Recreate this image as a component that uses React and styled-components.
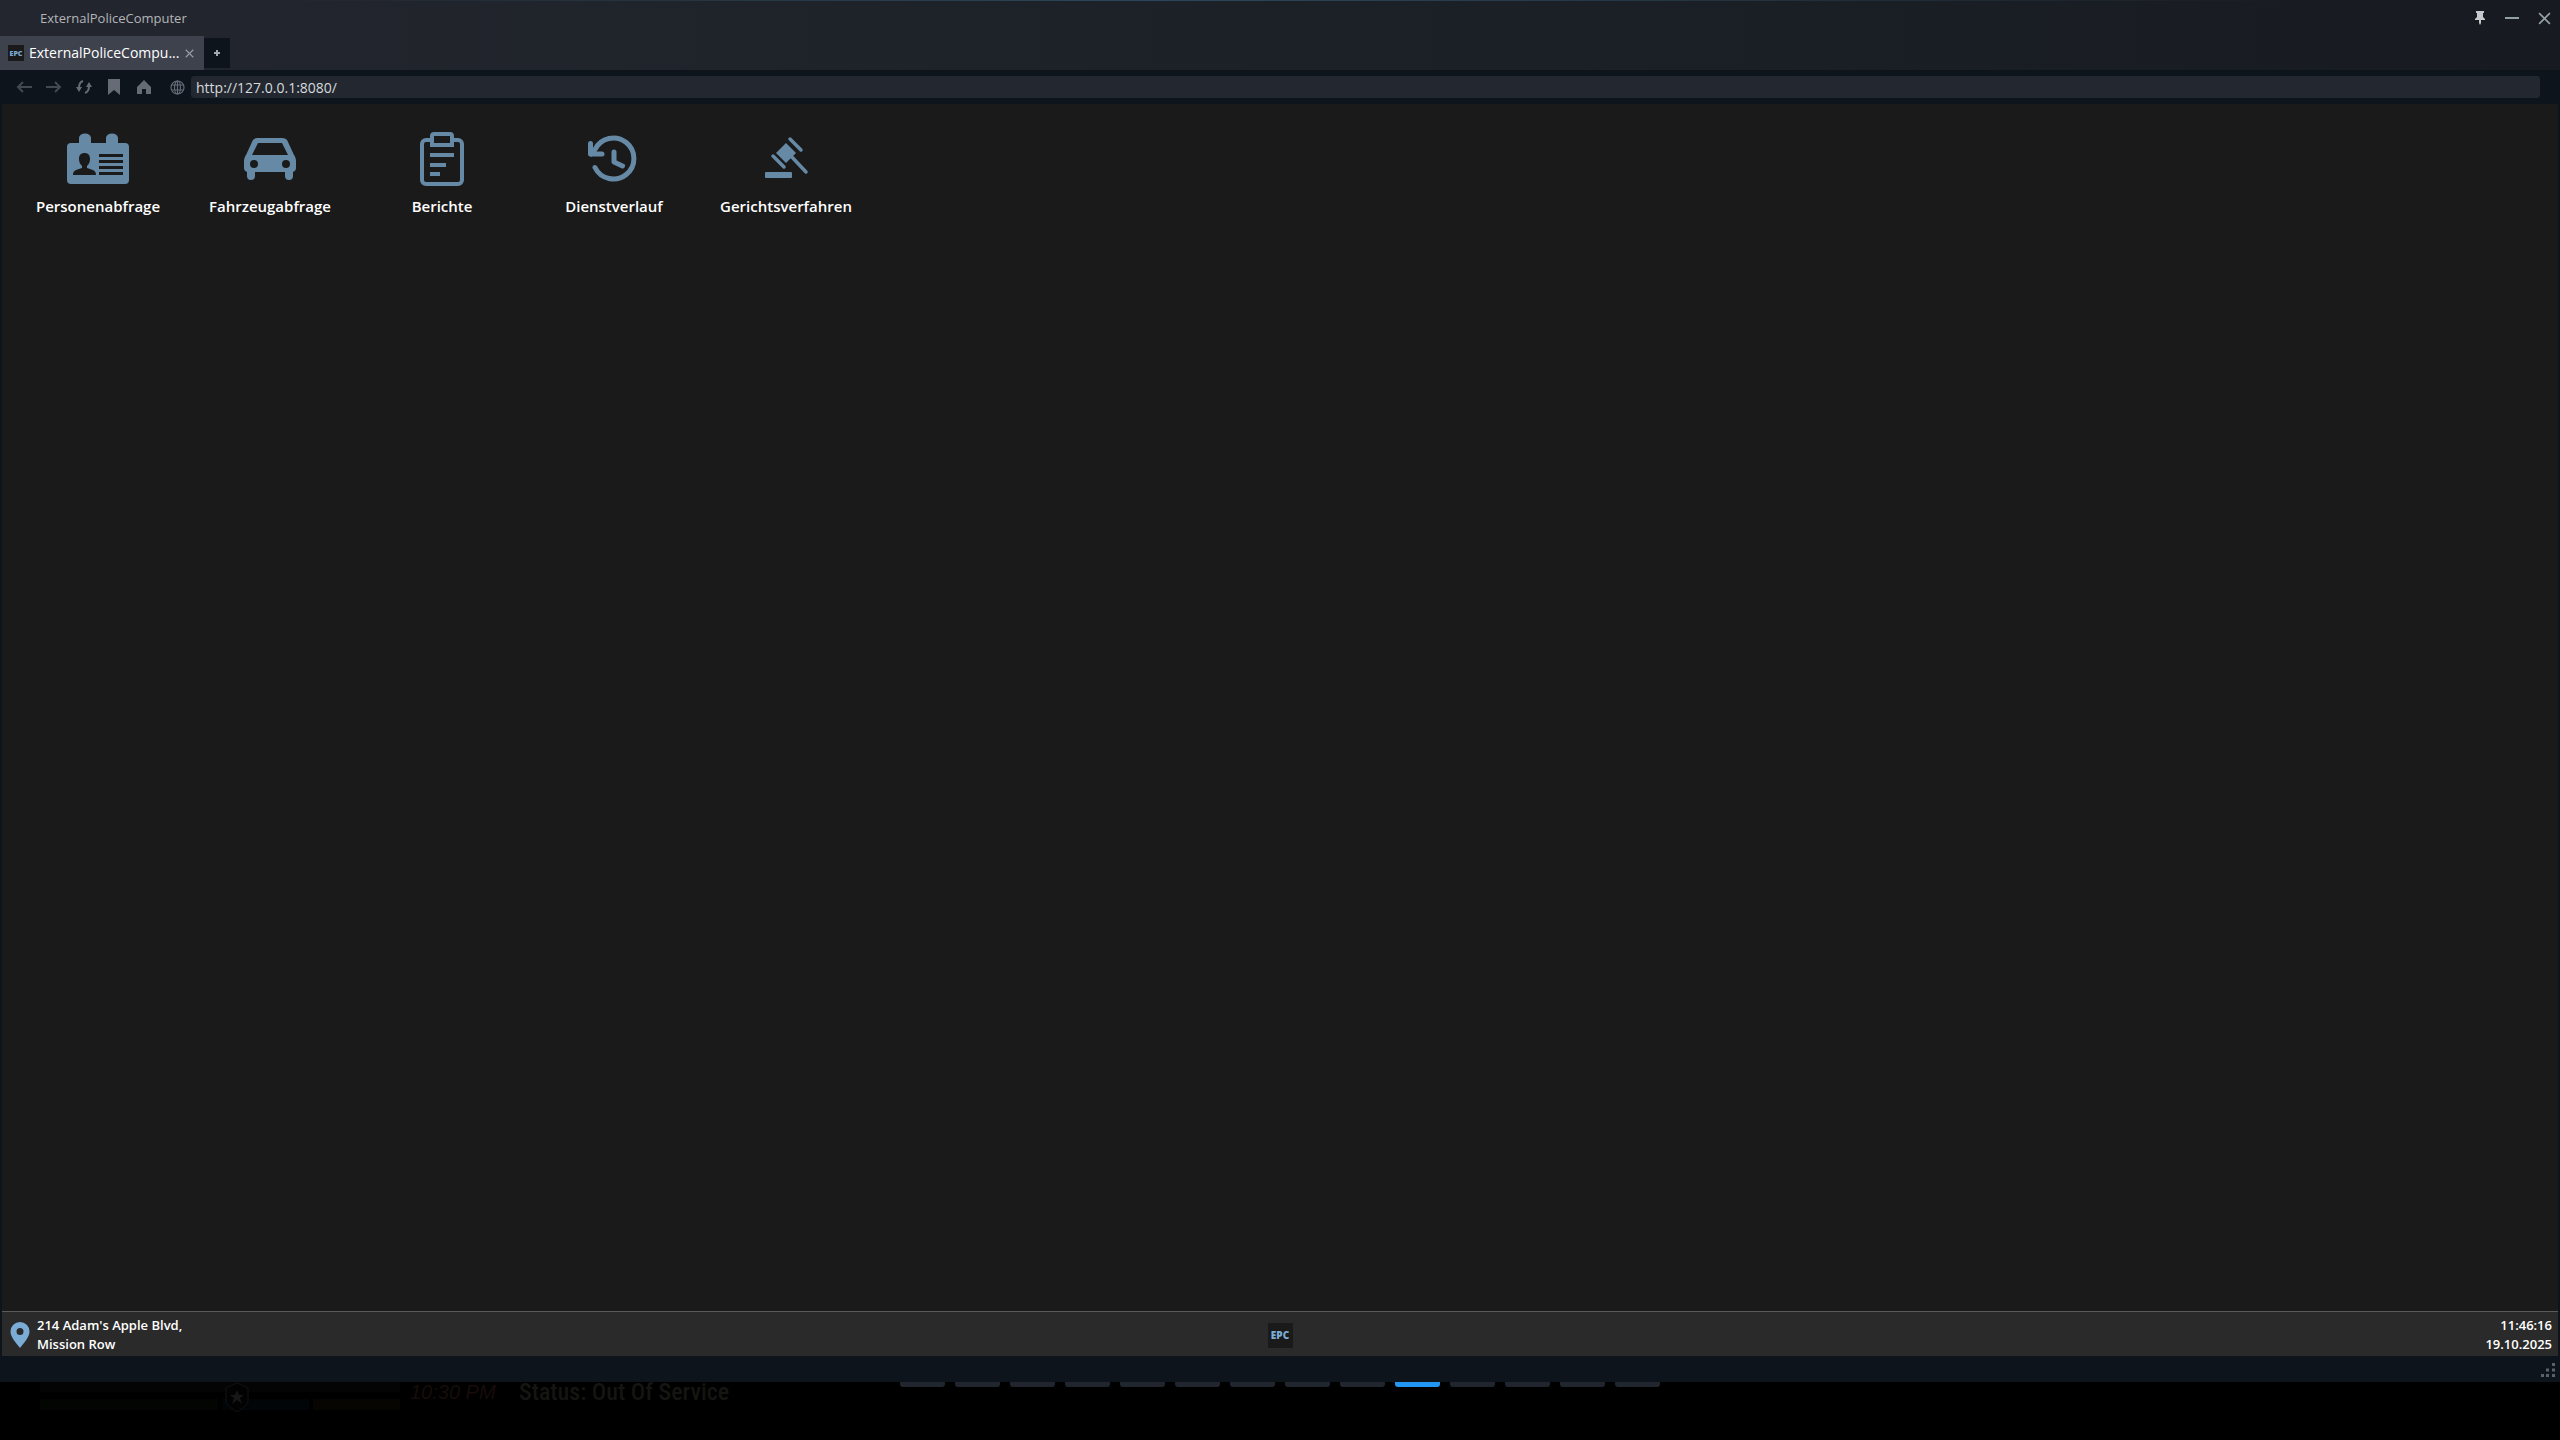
import React from 'react';
import styled, { createGlobalStyle, css } from 'styled-components';

const GlobalStyle = createGlobalStyle`
  * {
    box-sizing: border-box;
  }

  body {
    margin: 0;
    background: #000;
    font-family: 'Open Sans', 'Noto Sans', sans-serif;
  }

  button {
    border: 0;
    padding: 0;
    background: none;
    font: inherit;
    color: inherit;
    cursor: pointer;
  }
`;

const Screen = styled.div`
  display: flex;
  flex-direction: column;
  min-height: 100vh;
  background: #000;
`;

const Window = styled.main`
  display: flex;
  flex-direction: column;
  flex: 1;
  background: #0d141c;
`;

const WindowTop = styled.header`
  background:
    linear-gradient(to right, transparent 10%, #2c475b 45%, transparent 90%) 0 0 / 100% 1px no-repeat,
    linear-gradient(to right, #23262e, #1c2128 50%, #171a21);
`;

const TitleBar = styled.div`
  display: flex;
  align-items: center;
  justify-content: space-between;
  height: 36px;
  padding: 0 8px 0 40px;
`;

const Title = styled.h1`
  margin: 0;
  font-size: 13px;
  font-weight: 400;
  line-height: 18px;
  color: #b3b5b9;
`;

const WindowButtons = styled.div`
  display: flex;
  gap: 16px;
`;

const WindowButton = styled.button`
  display: flex;
  align-items: center;
  justify-content: center;
  width: 16px;
  height: 16px;
  color: #93a0a8;
`;

const TabBar = styled.nav`
  display: flex;
  align-items: center;
  height: 34px;
`;

const Tab = styled.div`
  display: flex;
  align-items: center;
  gap: 5px;
  width: 204px;
  height: 34px;
  padding: 0 10px 0 8px;
  background: #3d424d;
  color: #fff;
`;

const TabTitle = styled.span`
  flex: 1;
  white-space: nowrap;
  font-size: 14px;
  font-weight: 500;
  line-height: 20px;
`;

const TabClose = styled.button`
  display: flex;
  color: #9a9da3;
`;

const NewTab = styled.button`
  display: flex;
  align-items: center;
  justify-content: center;
  width: 26px;
  height: 30px;
  background: #0d141c;
  color: #a5a8ac;
`;

const Toolbar = styled.div`
  display: flex;
  align-items: center;
  height: 34px;
  padding: 0 20px 0 16px;
`;

const ToolButtons = styled.div`
  display: flex;
  gap: 14px;
  margin-right: 18px;
`;

const ToolButton = styled.button`
  display: flex;
  color: ${(props) => (props.disabled ? '#434851' : '#666b75')};
`;

const AddressIcon = styled.label`
  display: flex;
  margin-right: 6px;
  color: #666b75;
`;

const AddressInput = styled.input`
  flex: 1;
  height: 22px;
  padding: 0 5px;
  border: 0;
  border-radius: 3px;
  outline: 0;
  background: #23272f;
  color: #d5dade;
  font: 400 14px 'Open Sans', 'Noto Sans', sans-serif;
`;

const Page = styled.section`
  display: flex;
  flex-direction: column;
  flex: 1;
  margin: 0 2px;
  background: #1a1a1a;
  color: #fff;
`;

const Desktop = styled.div`
  display: flex;
  align-items: flex-start;
  flex: 1;
  gap: 22px;
  padding: 24px 21px;
`;

const Shortcut = styled.button`
  display: flex;
  flex-direction: column;
  align-items: center;
  gap: 8px;
  width: 150px;
  color: #6689a5;
`;

const ShortcutLabel = styled.span`
  color: #fff;
  font-size: 15px;
  font-weight: 600;
  line-height: 24px;
`;

const Taskbar = styled.footer`
  display: grid;
  grid-template-columns: 1fr auto 1fr;
  align-items: center;
  height: 45px;
  padding: 2px 6px 0;
  border-top: 1px solid #5a5a5a;
  background: #2a2a2a;
  font-size: 13px;
  font-weight: 600;
  line-height: 19px;
`;

const Location = styled.div`
  display: flex;
  align-items: center;
  gap: 7px;
  padding-left: 2px;
`;

const Clock = styled.div`
  text-align: right;
`;

const Badge = styled.span`
  display: flex;
  align-items: center;
  justify-content: center;
  width: 25px;
  height: 25px;
  background: #1a1a1a;
  color: #7aacd6;
  font: 800 10px 'Open Sans', sans-serif;

  ${(props) =>
    props.$small &&
    css`
      width: 16px;
      height: 16px;
      font-size: 7px;
    `}
`;

const ResizeBar = styled.div`
  display: flex;
  align-items: flex-end;
  justify-content: flex-end;
  height: 26px;
  padding: 5px;
  color: #59616b;
`;

const Overlay = styled.div`
  display: grid;
  grid-template-columns: 1fr auto 1fr;
  align-items: start;
  height: 58px;
`;

const GameHud = styled.div`
  display: flex;
  align-items: flex-start;
  padding-left: 40px;
`;

const HudBars = styled.svg`
  width: 360px;
  height: 30px;
  margin-right: 10px;
`;

const HudTime = styled.span`
  width: 109px;
  color: #170c0a;
  font: italic 400 20px/20px 'Liberation Sans', sans-serif;
`;

const HudStatus = styled.span`
  color: #151512;
  font: 500 24px/20px 'Liberation Sans Narrow', 'Roboto Condensed', Roboto, sans-serif;
`;

const Slots = styled.div`
  display: flex;
  gap: 10px;
`;

const Slot = styled.span`
  width: 45px;
  height: 5px;
  border-radius: 0 0 3px 3px;
  background: ${(props) => (props.$active ? '#2196f3' : '#21252d')};
`;

const PersonIcon = () => (
  <svg width="64" height="58" viewBox="0 0 64 58" aria-hidden="true">
    <path
      fill="currentColor"
      fillRule="evenodd"
      d="M13 15V10a6 4.500 0 0 1 12 0v5h15v-5a6 4.500 0 0 1 12 0v5h7a4 4 0 0 1 4 4v33a4 4 0 0 1-4 4H5a4 4 0 0 1-4-4V19a4 4 0 0 1 4-4zM7 47h23c0-4-2-5-9-7v-2c2-2 3-4 3-7 0-4-2-6-5.500-6s-5.500 2-5.500 6c0 3 1 5 3 7v2c-7 2-9 3-9 7zM33 26v3h24v-3zm0 6v3h24v-3zm0 6v3h24v-3zm0 6v3h24v-3z"
    />
  </svg>
);

const CarIcon = () => (
  <svg width="64" height="58" viewBox="0 0 64 58" aria-hidden="true">
    <path
      fill="currentColor"
      fillRule="evenodd"
      d="M20 10h24c3 0 5 1 6 4l6 13c1 1 2 4 2 6v7c0 2-1 3-3 4v4a4 4 0 0 1-8 0v-4H17v4a4 4 0 0 1-8 0v-4c-2-1-3-2-3-4v-7c0-2 1-5 2-6l6-13c1-3 3-4 6-4zM20 15 14 27h36l-6-12zM16 32a4 4 0 1 0 0 8 4 4 0 0 0 0-8zM48 32a4 4 0 1 0 0 8 4 4 0 0 0 0-8z"
    />
  </svg>
);

const ReportIcon = () => (
  <svg width="64" height="58" viewBox="0 0 64 58" fill="none" stroke="currentColor" strokeWidth="4" aria-hidden="true">
    <path d="M21 12h-5a4 4 0 0 0-4 4v36a4 4 0 0 0 4 4h32a4 4 0 0 0 4-4V16a4 4 0 0 0-4-4h-5" />
    <path d="M22 17V8a2 2 0 0 1 2-2h16a2 2 0 0 1 2 2v9z" />
    <path d="M20 27h24M20 37h16M20 46h10" />
  </svg>
);

const HistoryIcon = () => (
  <svg width="64" height="58" viewBox="0 0 64 58" fill="none" stroke="currentColor" strokeWidth="5" strokeLinecap="round" strokeLinejoin="round" aria-hidden="true">
    <path d="M13 39.500A20.500 20.500 0 1 0 13 21.500L9 26" />
    <path d="M8.500 15.500v10.500h11.500" />
    <path d="M32 24v10l8.500 4" />
  </svg>
);

const GavelIcon = () => (
  <svg width="64" height="58" viewBox="0 0 64 58" aria-hidden="true">
    <rect x="11" y="44" width="27" height="6" rx="1" fill="currentColor" />
    <path fill="currentColor" d="m22 25 10-10 10 10-10 10z" />
    <path d="m19 28 11 11M36 11l11 11M36 27l16 17" stroke="currentColor" strokeWidth="3.500" strokeLinecap="round" />
  </svg>
);

const PinIcon = () => (
  <svg width="16" height="16" viewBox="0 0 16 16" aria-hidden="true">
    <path fill="#c6c9cc" d="M4 1h8v2h-1v4l2 2v1H9v3l-1 2-1-2v-3H3V9l2-2V3H4z" />
  </svg>
);

const ArrowIcon = ({ forward }) => (
  <svg width="16" height="16" viewBox="0 0 16 16" fill="none" stroke="currentColor" strokeWidth="2" aria-hidden="true">
    <path d={forward ? 'M0 8h14M9 3l5 5-5 5' : 'M16 8H2M7 3 2 8l5 5'} />
  </svg>
);

const ReloadIcon = () => (
  <svg width="16" height="16" viewBox="0 0 16 16" aria-hidden="true">
    <path d="M7 2C4 3 3 5 3 9M9 14c3-1 4-3 4-7" fill="none" stroke="currentColor" strokeWidth="2" />
    <path fill="currentColor" d="M0 8h6l-3 5zM10 8h6l-3-5z" />
  </svg>
);

const BookmarkIcon = () => (
  <svg width="16" height="16" viewBox="0 0 16 16" aria-hidden="true">
    <path fill="currentColor" d="M2 0h12v16l-6-5-6 5z" />
  </svg>
);

const HomeIcon = () => (
  <svg width="16" height="16" viewBox="0 0 16 16" aria-hidden="true">
    <path fill="currentColor" d="M8 1 1 8v7h5v-5h4v5h5V8z" />
  </svg>
);

const GlobeIcon = () => (
  <svg width="15" height="15" viewBox="0 0 15 15" fill="none" stroke="currentColor" strokeWidth="1.200" aria-hidden="true">
    <circle cx="7.500" cy="7.500" r="6.500" />
    <ellipse cx="7.500" cy="7.500" rx="3" ry="6.500" />
    <path d="M7.500 1v13M2 5h11M2 10h11" />
  </svg>
);

const CloseIcon = ({ size }) => (
  <svg width={size} height={size} viewBox="0 0 12 12" fill="none" stroke="currentColor" strokeWidth="1.500" aria-hidden="true">
    <path d="m1 1 10 10M11 1 1 11" />
  </svg>
);

const MarkerIcon = () => (
  <svg width="20" height="26" viewBox="0 0 20 26" aria-hidden="true">
    <path fill="#7aacd6" fillRule="evenodd" d="M10 0a9.500 9.500 0 0 1 9.500 9.500C19.500 15 14 21 10 26 6 21 .5 15 .5 9.500A9.500 9.500 0 0 1 10 0zm0 6a3.500 3.500 0 1 0 0 7 3.500 3.500 0 0 0 0-7z" />
  </svg>
);

const GripIcon = () => (
  <svg width="14" height="14" viewBox="0 0 14 14" fill="currentColor" aria-hidden="true">
    <path d="M11 0h3v3h-3zM5 5.500h3v3H5zM11 5.500h3v3h-3zM0 11h3v3H0zM5 11h3v3H5zM11 11h3v3h-3z" />
  </svg>
);

const shortcuts = [
  { label: 'Personenabfrage', Icon: PersonIcon },
  { label: 'Fahrzeugabfrage', Icon: CarIcon },
  { label: 'Berichte', Icon: ReportIcon },
  { label: 'Dienstverlauf', Icon: HistoryIcon },
  { label: 'Gerichtsverfahren', Icon: GavelIcon },
];

const slots = Array.from({ length: 14 }, (_, index) => index);

function App() {
  return (
    <Screen>
      <GlobalStyle />
      <Window>
        <WindowTop>
          <TitleBar>
            <Title>ExternalPoliceComputer</Title>
            <WindowButtons>
              <WindowButton aria-label="Pin"><PinIcon /></WindowButton>
              <WindowButton aria-label="Minimize">
                <svg width="14" height="2" aria-hidden="true"><path d="M0 1h14" stroke="currentColor" strokeWidth="2" /></svg>
              </WindowButton>
              <WindowButton aria-label="Close"><CloseIcon size={13} /></WindowButton>
            </WindowButtons>
          </TitleBar>
          <TabBar>
            <Tab>
              <Badge $small>EPC</Badge>
              <TabTitle>ExternalPoliceCompu...</TabTitle>
              <TabClose aria-label="Close tab"><CloseIcon size={9} /></TabClose>
            </Tab>
            <NewTab aria-label="New tab">
              <svg width="6" height="6" aria-hidden="true"><path d="M3 0v6M0 3h6" stroke="currentColor" strokeWidth="2" /></svg>
            </NewTab>
          </TabBar>
        </WindowTop>
        <Toolbar>
          <ToolButtons>
            <ToolButton disabled aria-label="Back"><ArrowIcon /></ToolButton>
            <ToolButton disabled aria-label="Forward"><ArrowIcon forward /></ToolButton>
            <ToolButton aria-label="Reload"><ReloadIcon /></ToolButton>
            <ToolButton aria-label="Bookmark"><BookmarkIcon /></ToolButton>
            <ToolButton aria-label="Home"><HomeIcon /></ToolButton>
          </ToolButtons>
          <AddressIcon htmlFor="address" aria-label="Address"><GlobeIcon /></AddressIcon>
          <AddressInput id="address" aria-label="Address" defaultValue="http://127.0.0.1:8080/" />
        </Toolbar>
        <Page>
          <Desktop>
            {shortcuts.map(({ label, Icon }) => (
              <Shortcut key={label}>
                <Icon />
                <ShortcutLabel>{label}</ShortcutLabel>
              </Shortcut>
            ))}
          </Desktop>
          <Taskbar>
            <Location>
              <MarkerIcon />
              <div>
                214 Adam's Apple Blvd,
                <br />
                Mission Row
              </div>
            </Location>
            <Badge>EPC</Badge>
            <Clock>
              11:46:16
              <br />
              19.10.2025
            </Clock>
          </Taskbar>
        </Page>
        <ResizeBar><GripIcon /></ResizeBar>
      </Window>
      <Overlay>
        <GameHud>
          <HudBars viewBox="0 0 360 30" aria-hidden="true">
            <path d="M0 0h360v10H0z" fill="#050404" />
            <path d="M0 17h178v11H0z" fill="#030503" />
            <path d="M183 17h86v11h-86z" fill="#020507" />
            <path d="M273 17h87v11h-87z" fill="#070502" />
            <path d="M197 1 208 6v12c0 5-5 8-11 12-6-4-11-7-11-12V6z" fill="#020202" stroke="#121212" />
            <path d="m197 8 2 5h5l-4 3 2 6-5-4-5 4 2-6-4-3h5z" fill="#171717" />
          </HudBars>
          <HudTime>10:30 PM</HudTime>
          <HudStatus>Status: Out Of Service</HudStatus>
        </GameHud>
        <Slots>
          {slots.map((slot) => (
            <Slot key={slot} $active={slot === 9} />
          ))}
        </Slots>
      </Overlay>
    </Screen>
  );
}

export default App;
